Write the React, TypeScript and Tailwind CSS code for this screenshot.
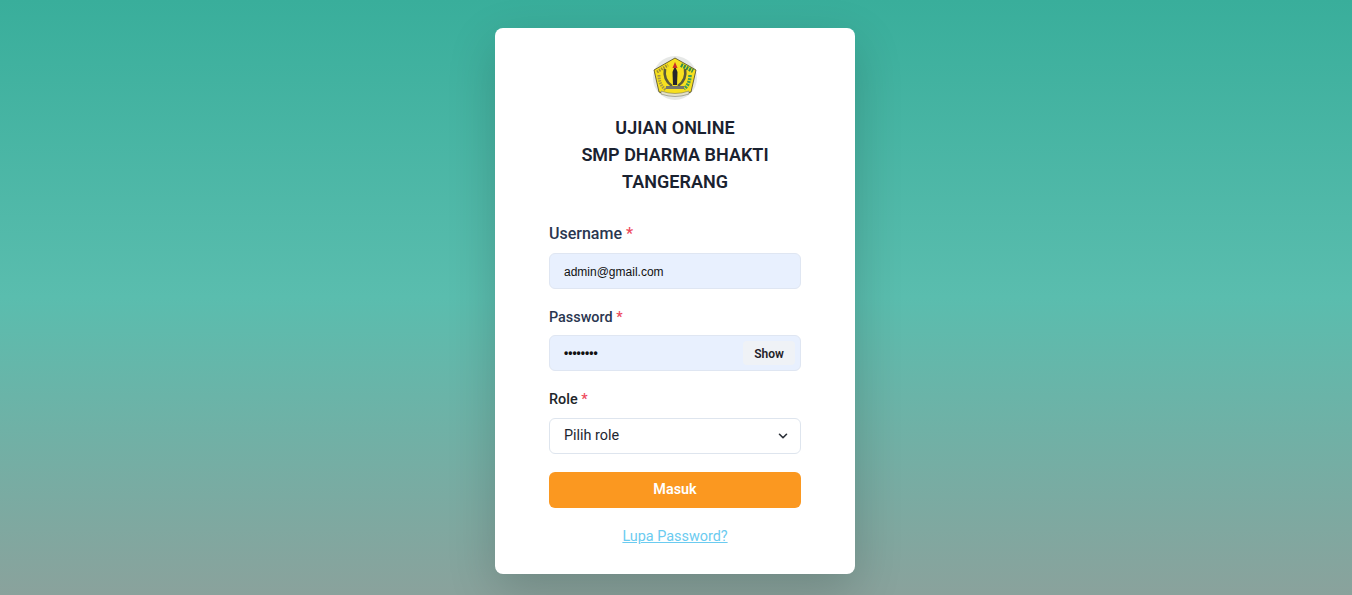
import { ChevronDown } from 'lucide-react';

const Logo = () => (
  <svg width="46" height="46" viewBox="0 0 46 46" className="block">
    <circle cx="23" cy="23" r="22" fill="#e6e8e6" />
    <path d="M23 3 L44 15 L39 37 Q23 44 7 37 L2 15 Z" fill="#f7e01f" stroke="#4a4526" strokeWidth="0.8" />
    {/* left chain and right leaves */}
    <path d="M5 17 L16 10" stroke="#9a8a35" strokeWidth="3" strokeDasharray="1.5 1" fill="none" />
    <path d="M7 20 Q7 30 14 35" stroke="#a3954a" strokeWidth="3" strokeDasharray="1.5 1" fill="none" />
    <path d="M29 10 L41 16" stroke="#2f8a4f" strokeWidth="4" strokeDasharray="2 1" fill="none" />
    <path d="M38 20 Q38 29 32 34" stroke="#3b9a5c" strokeWidth="3.5" strokeDasharray="2 1" fill="none" />
    {/* wreath */}
    <path d="M13 14 Q11 25 20 31" stroke="#5b5a3a" strokeWidth="2.6" fill="none" />
    <path d="M33 14 Q35 25 26 31" stroke="#5b5a3a" strokeWidth="2.6" fill="none" />
    {/* pencil */}
    <path d="M23 11 L25.5 17 L25 30 L21 30 L20.5 17 Z" fill="#25252b" />
    <path d="M23 7 L25.5 13 L20.5 13 Z" fill="#c92f2a" />
    {/* base and banner */}
    <rect x="14" y="31" width="18" height="3" fill="#77776a" />
    <path d="M9 36 Q23 41 37 36 L37 39 Q23 44 9 39 Z" fill="#e4e1c8" stroke="#6b6a55" strokeWidth="0.5" />
  </svg>
);

const Label = ({ text, className }: { text: string; className: string }) => (
  <label className={`block font-medium ${className}`}>
    {text} <span className="text-[#ee4a5c]">*</span>
  </label>
);

export default function App() {
  return (
    <div className="h-[595px] overflow-hidden bg-[linear-gradient(180deg,#39ae9b_0%,#5abdae_50%,#8aa29c_100%)] pt-7 pr-[2px] font-['Roboto',sans-serif]">
      <div className="mx-auto h-[546px] w-[360px] rounded-lg bg-white px-[54px] pt-[27px] shadow-[0_16px_48px_rgba(0,0,0,0.175)]">
        <div className="flex justify-center">
          <Logo />
        </div>
        <h1 className="mt-[13px] text-center text-lg leading-[27px] font-semibold text-[#1a2230]">
          UJIAN ONLINE
          <br />
          SMP DHARMA BHAKTI
          <br />
          TANGERANG
        </h1>
        <div className="mt-[27px]">
          <Label text="Username" className="text-base leading-6 text-[#2a3650]" />
          <div className="mt-[7px] flex h-9 items-center rounded-md border border-[#dfe6f2] bg-[#e8f0fe] pt-px pr-[15px] pl-[14px] font-['Liberation_Sans',sans-serif] text-xs text-[#111]">
            admin@gmail.com
          </div>
        </div>
        <div className="mt-[18px]">
          <Label text="Password" className="text-[14.4px] leading-[22px] text-[#2a3650]" />
          <div className="mt-[6px] flex h-9 items-center justify-between rounded-md border border-[#dfe6f2] bg-[#e8f0fe] pr-[5px] pl-[14px] text-[#111]">
            <span className="font-['Liberation_Sans',sans-serif] text-xs font-bold">••••••••</span>
            <span className="flex h-6 w-[52px] items-center justify-center rounded bg-[#eff2f6] pt-px text-xs font-semibold text-[#1f2229]">
              Show
            </span>
          </div>
        </div>
        <div className="mt-[18px]">
          <Label text="Role" className="text-[14.4px] leading-[22px] text-[#212529]" />
          <div className="mt-[7px] flex h-9 items-center justify-between rounded-md border border-[#dee5ee] bg-white pr-[10px] pl-[14px] text-[14.4px] text-[#1e2630]">
            Pilih role
            <ChevronDown size={14} strokeWidth={2.75} className="text-[#2b3038]" />
          </div>
        </div>
        <button className="mt-[18px] block h-9 w-full rounded-md bg-[#fb9820] text-[14.4px] font-semibold text-white">
          Masuk
        </button>
        <div className="mt-4 text-center">
          <a className="text-[14.4px] text-[#6bcbf0] underline">Lupa Password?</a>
        </div>
      </div>
    </div>
  );
}
